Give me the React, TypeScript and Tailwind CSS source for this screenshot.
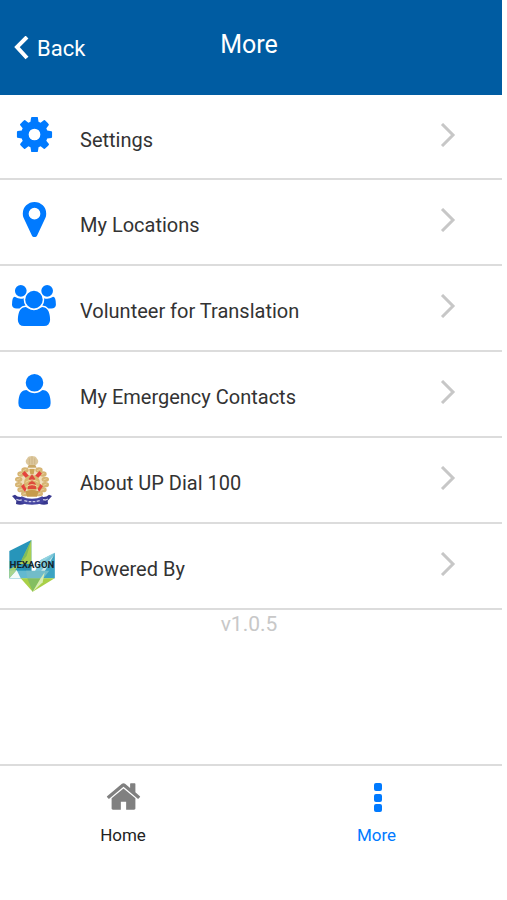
import type { ReactNode } from 'react';

const GEAR =
  'M1152 896q0-106-75-181t-181-75-181 75-75 181 75 181 181 75 181-75 75-181zm512-109v222q0 12-8 23t-20 13l-185 28q-19 54-39 91 35 50 107 138 10 12 10 25t-9 23q-27 37-99 108t-94 71q-12 0-26-9l-138-108q-44 23-91 38-16 136-29 186-7 28-36 28h-222q-14 0-24.5-8.5t-11.5-21.5l-28-184q-49-16-90-37l-141 107q-10 9-25 9-14 0-25-11-126-114-165-168-7-10-7-23 0-12 8-23 15-21 51-66.5t54-70.5q-27-50-41-99l-183-27q-13-2-21-12.5t-8-23.5v-222q0-12 8-23t19-13l186-28q14-46 39-92-40-57-107-138-10-12-10-24 0-10 9-23 26-36 98.5-107.5t94.5-71.5q13 0 26 10l138 107q44-23 91-38 16-136 29-186 7-28 36-28h222q14 0 24.5 8.5t11.5 21.5l28 184q49 16 90 37l142-107q9-9 24-9 13 0 25 10 129 119 165 170 7 8 7 22 0 12-8 23-15 21-51 66.5t-54 70.5q26 50 41 98l183 28q13 2 21 12.5t8 23.5z';
const PIN =
  'M1152 640q0-106-75-181t-181-75-181 75-75 181 75 181 181 75 181-75 75-181zm256 0q0 109-33 179l-364 774q-16 33-47.5 52t-67.5 19-67.5-19-46.5-52l-365-774q-33-70-33-179 0-212 150-362t362-150 362 150 150 362z';
const GROUP =
  'M593 896q-162 5-265 128h-134q-82 0-138-40.5t-56-118.5q0-353 124-353 6 0 43.5 21t97.5 42.5 119 21.5q67 0 133-23-5 37-5 66 0 139 81 256zm1071 637q0 120-73 189.5t-194 69.5h-874q-121 0-194-69.5t-73-189.5q0-53 3.5-103.5t14-109 26.5-108.5 43-97.5 62-81 85.5-53.5 111.5-20q10 0 43 21.5t73 48 107 48 135 21.5 135-21.5 107-48 73-48 43-21.5q61 0 111.5 20t85.5 53.5 62 81 43 97.5 26.5 108.5 14 109 3.5 103.5zm-1024-1277q0 106-75 181t-181 75-181-75-75-181 75-181 181-75 181 75 75 181zm704 384q0 159-112.5 271.5t-271.5 112.5-271.5-112.5-112.5-271.5 112.5-271.5 271.5-112.5 271.5 112.5 112.5 271.5zm576 225q0 78-56 118.5t-138 40.5h-134q-103-123-265-128 81-117 81-256 0-29-5-66 66 23 133 23 59 0 119-21.5t97.5-42.5 43.5-21q124 0 124 353zm-128-609q0 106-75 181t-181 75-181-75-75-181 75-181 181-75 181 75 75 181z';
const PERSON =
  'M1600 1405q0 120-73 189.5t-194 69.5h-874q-121 0-194-69.5t-73-189.5q0-53 3.5-103.5t14-109 26.5-108.5 43-97.5 62-81 85.5-53.5 111.5-20q9 0 42 21.5t74.5 48 108 48 133.5 21.5 133.5-21.5 108-48 74.5-48 42-21.5q61 0 111.5 20t85.5 53.5 62 81 43 97.5 26.5 108.5 14 109 3.5 103.5zm-320-893q0 159-112.5 271.5t-271.5 112.5-271.5-112.5-112.5-271.5 112.5-271.5 271.5-112.5 271.5 112.5 112.5 271.5z';
const HOUSE =
  'M1472 992v480q0 26-19 45t-45 19h-384v-384h-256v384h-384q-26 0-45-19t-19-45v-480q0-1 .5-3t.5-3l575-474 575 474q1 2 1 6zm223-69l-62 74q-8 9-21 11h-3q-13 0-21-7l-692-577-692 577q-12 8-24 7-13-2-21-11l-62-74q-8-10-7-23.5t11-21.5l719-599q32-26 76-26t76 26l244 204v-195q0-14 9-23t23-9h192q14 0 23 9t9 23v408l219 182q10 8 11 21.5t-7 23.5z';

function Glyph({ d, width = 1792 }: { d: string; width?: number }) {
  return (
    <svg viewBox={`0 0 ${width} 1792`} className="h-[41px]" fill="currentColor" aria-hidden="true">
      <path d={d} />
    </svg>
  );
}

function PoliceEmblem() {
  const leaves = [
    [47, 53], [35, 65], [28, 81], [28, 97], [35, 112], [46, 124],
    [89, 53], [101, 65], [108, 81], [108, 97], [101, 112], [90, 124],
  ];
  return (
    <svg viewBox="8 8 120 150" className="h-[50px] w-10" aria-hidden="true">
      <path d="M57 38c-9-5-10-14-4-19 2-6 8-8 15-8s13 2 15 8c6 5 5 14-4 19z" fill="#dcc79c" />
      <path d="M60 18v18M68 13v23M76 18v18" stroke="#c9ae7d" strokeWidth="2" />
      <path d="M58 38h20l4 8H54z" fill="#c9a765" />
      <circle cx="68" cy="89" r="41" fill="#f0dfbc" />
      {leaves.map(([x, y]) => (
        <g key={`${x}-${y}`}>
          <ellipse cx={x} cy={y} rx="11" ry="8" fill="#d6b473" />
          <path d={`M${x - 6} ${y + 2}l10-4`} stroke="#eedbab" strokeWidth="2" />
        </g>
      ))}
      <path d="m38 64 8-8 18 20-7 9zM98 64l-8-8-18 20 7 9z" fill="#e4433d" />
      <path d="m35 102 11-9 8 10-7 16zM101 102l-11-9-8 10 7 16z" fill="#e4433d" />
      <path d="M60 50h16l-3 16H63z" fill="#cda457" />
      <circle cx="68" cy="92" r="24" fill="#dab670" />
      <path d="m68 66 10 14-10 8-10-8z" fill="#dc4a3d" />
      <path d="M58 92q10-10 20 0l3 18H55z" fill="#dd4b3b" />
      <path d="M49 90q19-14 38 0M51 103q17-12 34 0" fill="none" stroke="#f0d798" strokeWidth="3" />
      <path d="M48 117q20-8 40 0l-5 16H53z" fill="#c79b4b" />
      <path d="m8 131 9-4q9 9 23 6l7 21q-14 6-27 1l1-10zM128 131l-9-4q-9 9-23 6l-7 21q14 6 27 1l-1-10z" fill="#37378e" />
      <path d="M36 132q32 15 64 0l4 18q-36 15-72 0z" fill="#4444a0" />
      <path d="m21 141 9 3 7-1M45 145l9 2M58 148h8M70 148h8M82 147l9-2M101 142l7 1 8-3" fill="none" stroke="#c9c9e6" strokeWidth="4" />
    </svg>
  );
}

function HexagonLogo() {
  return (
    <svg viewBox="6 9 144 162" className="h-[54px] w-12" role="img" aria-label="Hexagon">
      <path d="M10 45 76 12v115H10z" fill="#2795ba" />
      <path d="M76 12v72H41z" fill="#a9cf52" />
      <path d="M76 12 41 84 62 60z" fill="#7fbb5c" />
      <path d="M41 84 10 127V100z" fill="#a4d06a" />
      <path d="M41 84 76 127V84z" fill="#2b8fb0" />
      <path d="M10 104h66v23H10z" fill="#63b9d0" />
      <path d="M32 102 10 127h34z" fill="#f4fbf8" />
      <path d="M10 104v23l22-25z" fill="#a9d58d" />
      <path d="M146 50 104 72 76 127h70z" fill="#79c5d8" />
      <path d="m146 50-42 22-8 18z" fill="#94d3e0" />
      <path d="M146 50v77h-42z" fill="#3ca3c2" />
      <path d="M146 54 98 114l6 13z" fill="#cce7e6" />
      <path d="M44 127h102l-66 40z" fill="#a9d047" />
      <path d="M64 127h40l-24 40z" fill="#83be61" />
      <path d="M60 104h70l-18 23H64z" fill="#72bcc9" />
      <path d="m80 167 24-40 12-18-6 30z" fill="#d8edb5" />
      <text x="78" y="97" textAnchor="middle" fontSize="29" fontWeight="700" fontFamily="Roboto, sans-serif" fill="#14252d">
        HEXAGON
      </text>
    </svg>
  );
}

function ChevronRight() {
  return (
    <svg viewBox="0 0 16 24" className="mt-1 h-6 w-4" fill="none" stroke="#c7c7c7" strokeWidth="3" aria-hidden="true">
      <path d="m2 1 11 11L2 23" />
    </svg>
  );
}

const GLYPH_SLOT = 'flex h-[30px] w-[68px] shrink-0 items-center justify-center text-[#007aff]';
const LOGO_SLOT = 'flex h-9 w-[68px] shrink-0 items-center justify-center pr-1';

const items: { label: string; slot: string; icon: ReactNode }[] = [
  { label: 'Settings', slot: GLYPH_SLOT, icon: <Glyph d={GEAR} /> },
  { label: 'My Locations', slot: GLYPH_SLOT, icon: <Glyph d={PIN} /> },
  { label: 'Volunteer for Translation', slot: GLYPH_SLOT, icon: <Glyph d={GROUP} width={1920} /> },
  { label: 'My Emergency Contacts', slot: GLYPH_SLOT, icon: <Glyph d={PERSON} /> },
  { label: 'About UP Dial 100', slot: LOGO_SLOT, icon: <PoliceEmblem /> },
  { label: 'Powered By', slot: LOGO_SLOT, icon: <HexagonLogo /> },
];

export default function App() {
  return (
    <div className="min-h-screen bg-white pr-[5px] font-['Roboto',sans-serif] text-[#333]">
      <div className="flex min-h-screen flex-col">
        <header className="grid h-[95px] grid-cols-[1fr_auto_1fr] items-center bg-[#005ca2] text-white">
          <button type="button" className="flex items-center gap-2 justify-self-start pl-[14px] text-[22px] leading-7">
            <svg viewBox="0 0 15 24" className="h-6 w-[15px]" fill="none" stroke="currentColor" strokeWidth="4" aria-hidden="true">
              <path d="M13 1 3 11l10 11" />
            </svg>
            <span className="pt-0.5">Back</span>
          </button>
          <h1 className="pr-1 pb-1.5 text-[25px] leading-8">More</h1>
        </header>

        <main className="flex-1">
          <ul>
            {items.map(({ label, slot, icon }) => (
              <li key={label} className="h-[86px] border-b-2 border-[#dcdcdc] first:h-[85px]">
                <button type="button" className="flex h-full w-full items-start pt-6 pr-[46px] text-left text-[20px] leading-8">
                  <span className={slot}>{icon}</span>
                  <span className="flex-1 pt-[5px] pl-3">{label}</span>
                  <ChevronRight />
                </button>
              </li>
            ))}
          </ul>
          <p className="pr-1 text-center text-[21px] leading-7 text-[#c8c8c8]">v1.0.5</p>
        </main>

        <nav className="grid h-[136px] grid-cols-2 items-start border-t-2 border-[#dcdcdc] text-[17px] leading-6">
          <a href="#home" className="flex flex-col items-center pt-3 pr-[5px] text-[#222]">
            <svg viewBox="0 0 1792 1792" className="h-[37px] w-[37px] text-[#808080]" fill="currentColor" aria-hidden="true">
              <path d={HOUSE} />
            </svg>
            <span className="pt-2">Home</span>
          </a>
          <a href="#more" aria-current="page" className="flex flex-col items-center pt-3 text-[#007aff]">
            <svg viewBox="0 0 37 37" className="h-[37px] w-[37px]" fill="currentColor" aria-hidden="true">
              <rect x="16" y="5" width="8" height="8" rx="2" />
              <rect x="16" y="16" width="8" height="8" rx="2" />
              <rect x="16" y="26" width="8" height="8" rx="2" />
            </svg>
            <span className="pt-2">More</span>
          </a>
        </nav>
      </div>
    </div>
  );
}
